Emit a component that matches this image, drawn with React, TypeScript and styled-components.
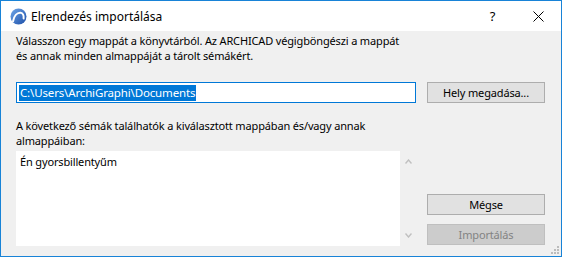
import React from "react";
import styled, { createGlobalStyle } from "styled-components";

const GlobalStyle = createGlobalStyle`
  html, body {
    margin: 0;
    padding: 0;
    background: #ffffff;
  }
  * {
    box-sizing: border-box;
  }
`;

function AppIcon() {
  return (
    <svg width="17" height="17" viewBox="0 0 17 17">
      <defs>
        <linearGradient id="ig" x1="0" y1="0" x2="1" y2="1">
          <stop offset="0" stopColor="#6fa6e8" />
          <stop offset="1" stopColor="#1d4fa8" />
        </linearGradient>
      </defs>
      <circle cx="8.5" cy="8.5" r="8" fill="url(#ig)" />
      <path
        d="M3 13.5 C4 8 7 4.5 10.5 4.8 C13 5 14 7.5 13.6 10.5"
        stroke="#ffffff"
        strokeWidth="2"
        fill="none"
        strokeLinecap="round"
      />
    </svg>
  );
}

function App() {
  return (
    <>
      <GlobalStyle />
      <Window>
        <TitleBar>
          <AppIcon />
          <Title>Elrendezés importálása</Title>
          <TitleButton>?</TitleButton>
          <TitleButton>
            <svg width="11" height="11" viewBox="0 0 11 11">
              <path d="M0.5 0.5 L10.5 10.5 M10.5 0.5 L0.5 10.5" stroke="#000" strokeWidth="1" />
            </svg>
          </TitleButton>
        </TitleBar>
        <Body>
          <Text>
            Válasszon egy mappát a könyvtárból. Az ARCHICAD végigböngészi a mappát
            <br />
            és annak minden almappáját a tárolt sémákért.
          </Text>
          <Row>
            <PathInput>
              <Selected>C:\Users\ArchiGraphi\Documents</Selected>
            </PathInput>
            <Button>Hely megadása...</Button>
          </Row>
          <Text>
            A következő sémák találhatók a kiválasztott mappában és/vagy annak
            <br />
            almappáiban:
          </Text>
          <ListRow>
            <List>
              <ListItem>Én gyorsbillentyűm</ListItem>
            </List>
            <ScrollBar>
              <Arrow viewBox="0 0 7 5" width="7" height="5">
                <path d="M0.5 4.5 L3.5 1 L6.5 4.5" stroke="#c0c0c0" strokeWidth="1.4" fill="none" />
              </Arrow>
              <Arrow viewBox="0 0 7 5" width="7" height="5">
                <path d="M0.5 0.5 L3.5 4 L6.5 0.5" stroke="#c0c0c0" strokeWidth="1.4" fill="none" />
              </Arrow>
            </ScrollBar>
            <ButtonColumn>
              <Button>Mégse</Button>
              <Button disabled>Importálás</Button>
            </ButtonColumn>
          </ListRow>
          <Grip>
            <svg width="10" height="10" viewBox="0 0 10 10">
              {[
                [7, 1],
                [4, 4],
                [7, 4],
                [1, 7],
                [4, 7],
                [7, 7],
              ].map(([x, y], i) => (
                <rect key={i} x={x} y={y} width="2" height="2" fill="#bcbcbc" />
              ))}
            </svg>
          </Grip>
        </Body>
      </Window>
    </>
  );
}

export default App;

const Window = styled.div`
  width: 562px;
  height: 257px;
  border: 1px solid #1883d7;
  display: flex;
  flex-direction: column;
  font-family: "Segoe UI", "Noto Sans", sans-serif;
  font-size: 11px;
  letter-spacing: -0.15px;
  color: #000;
  overflow: hidden;
`;

const TitleBar = styled.div`
  height: 30px;
  background: #ffffff;
  display: flex;
  align-items: center;
  padding-left: 9px;
  flex-shrink: 0;
`;

const Title = styled.div`
  flex: 1;
  margin-left: 4px;
  font-size: 12px;
  letter-spacing: 0;
  margin-top: 1px;
`;

const TitleButton = styled.div`
  width: 45px;
  height: 29px;
  display: flex;
  align-items: center;
  justify-content: center;
  font-size: 13px;
  &:last-child {
    width: 46px;
  }
`;

const Body = styled.div`
  flex: 1;
  background: #f0f0f0;
  padding: 2px 15px 0 15px;
  position: relative;
`;

const Text = styled.div`
  line-height: 15px;
  height: 30px;
`;

const Row = styled.div`
  display: flex;
  align-items: center;
  gap: 11px;
  margin-top: 19px;
  margin-bottom: 15px;
`;

const PathInput = styled.div`
  width: 400px;
  height: 21px;
  border: 1px solid #0078d7;
  background: #ffffff;
  padding: 1px 2px;
  display: flex;
  align-items: center;
`;

const Selected = styled.span`
  background: #0078d7;
  color: #ffffff;
  line-height: 16px;
  padding: 0 1px;
  font-size: 11.5px;
`;

const Button = styled.button`
  width: 118px;
  height: 21px;
  border: 1px solid ${(p) => (p.disabled ? "#bfbfbf" : "#adadad")};
  background: ${(p) => (p.disabled ? "#cccccc" : "#e1e1e1")};
  color: ${(p) => (p.disabled ? "#838383" : "#000000")};
  font-family: inherit;
  font-size: 11px;
  letter-spacing: inherit;
  padding: 0;
`;

const ListRow = styled.div`
  display: flex;
  margin-top: 3px;
`;

const List = styled.div`
  width: 384px;
  height: 95px;
  background: #ffffff;
  padding: 3px 4px;
`;

const ListItem = styled.div`
  line-height: 16px;
`;

const ScrollBar = styled.div`
  width: 17px;
  height: 95px;
  display: flex;
  flex-direction: column;
  justify-content: space-between;
  align-items: center;
  padding: 8px 0 8px;
`;

const Arrow = styled.svg`
  display: block;
`;

const ButtonColumn = styled.div`
  margin-left: 10px;
  display: flex;
  flex-direction: column;
  justify-content: flex-end;
  gap: 9px;
  padding-bottom: 1px;
`;

const Grip = styled.div`
  position: absolute;
  right: 1px;
  bottom: 1px;
  line-height: 0;
`;
